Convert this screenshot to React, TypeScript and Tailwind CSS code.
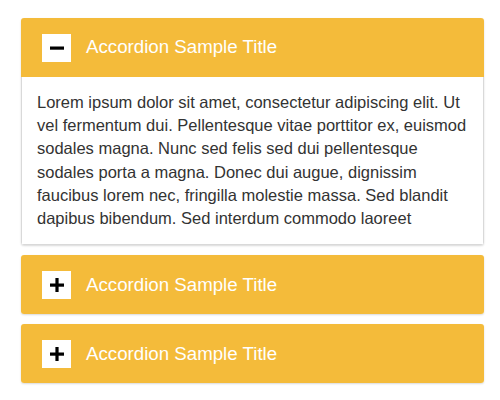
import { useState } from 'react'

const body =
  'Lorem ipsum dolor sit amet, consectetur adipiscing elit. Ut vel fermentum dui. Pellentesque vitae porttitor ex, euismod sodales magna. Nunc sed felis sed dui pellentesque sodales porta a magna. Donec dui augue, dignissim faucibus lorem nec, fringilla molestie massa. Sed blandit dapibus bibendum. Sed interdum commodo laoreet'

function ToggleIcon({ open }: { open: boolean }) {
  return (
    <span className="flex h-[28px] w-[29px] items-center justify-center bg-white">
      <svg width="16" height="16" viewBox="0 0 16 16">
        <rect x="1" y="6.5" width="14" height="3.2" fill="#000" />
        {!open && <rect x="6.4" y="1" width="3.2" height="14" fill="#000" />}
      </svg>
    </span>
  )
}

export default function App() {
  const [openIdx, setOpenIdx] = useState<number | null>(0)
  const items = [0, 1, 2]

  return (
    <div className="flex min-h-[400px] flex-col gap-[10px] bg-white pl-[21px] pr-[16px] pt-[18px] font-['Liberation_Sans',Arial,sans-serif]">
      {items.map((i) => {
        const open = openIdx === i
        return (
          <div key={i} className="overflow-hidden rounded-[3px] shadow-[0_1px_2px_rgba(0,0,0,0.15)]">
            <button
              onClick={() => setOpenIdx(open ? null : i)}
              className="flex h-[59px] w-full items-center gap-[15px] bg-[#f4bb3a] pl-[21px] text-left text-[18.7px] text-white"
            >
              <ToggleIcon open={open} />
              <span>Accordion Sample Title</span>
            </button>
            {open && (
              <div className="border-x border-b border-[#d9d9d9] bg-white pb-[14px] pl-[15px] pr-[4px] pt-[14px] text-[16.5px] leading-[23.2px] text-[#333]">
                {body}
              </div>
            )}
          </div>
        )
      })}
    </div>
  )
}
